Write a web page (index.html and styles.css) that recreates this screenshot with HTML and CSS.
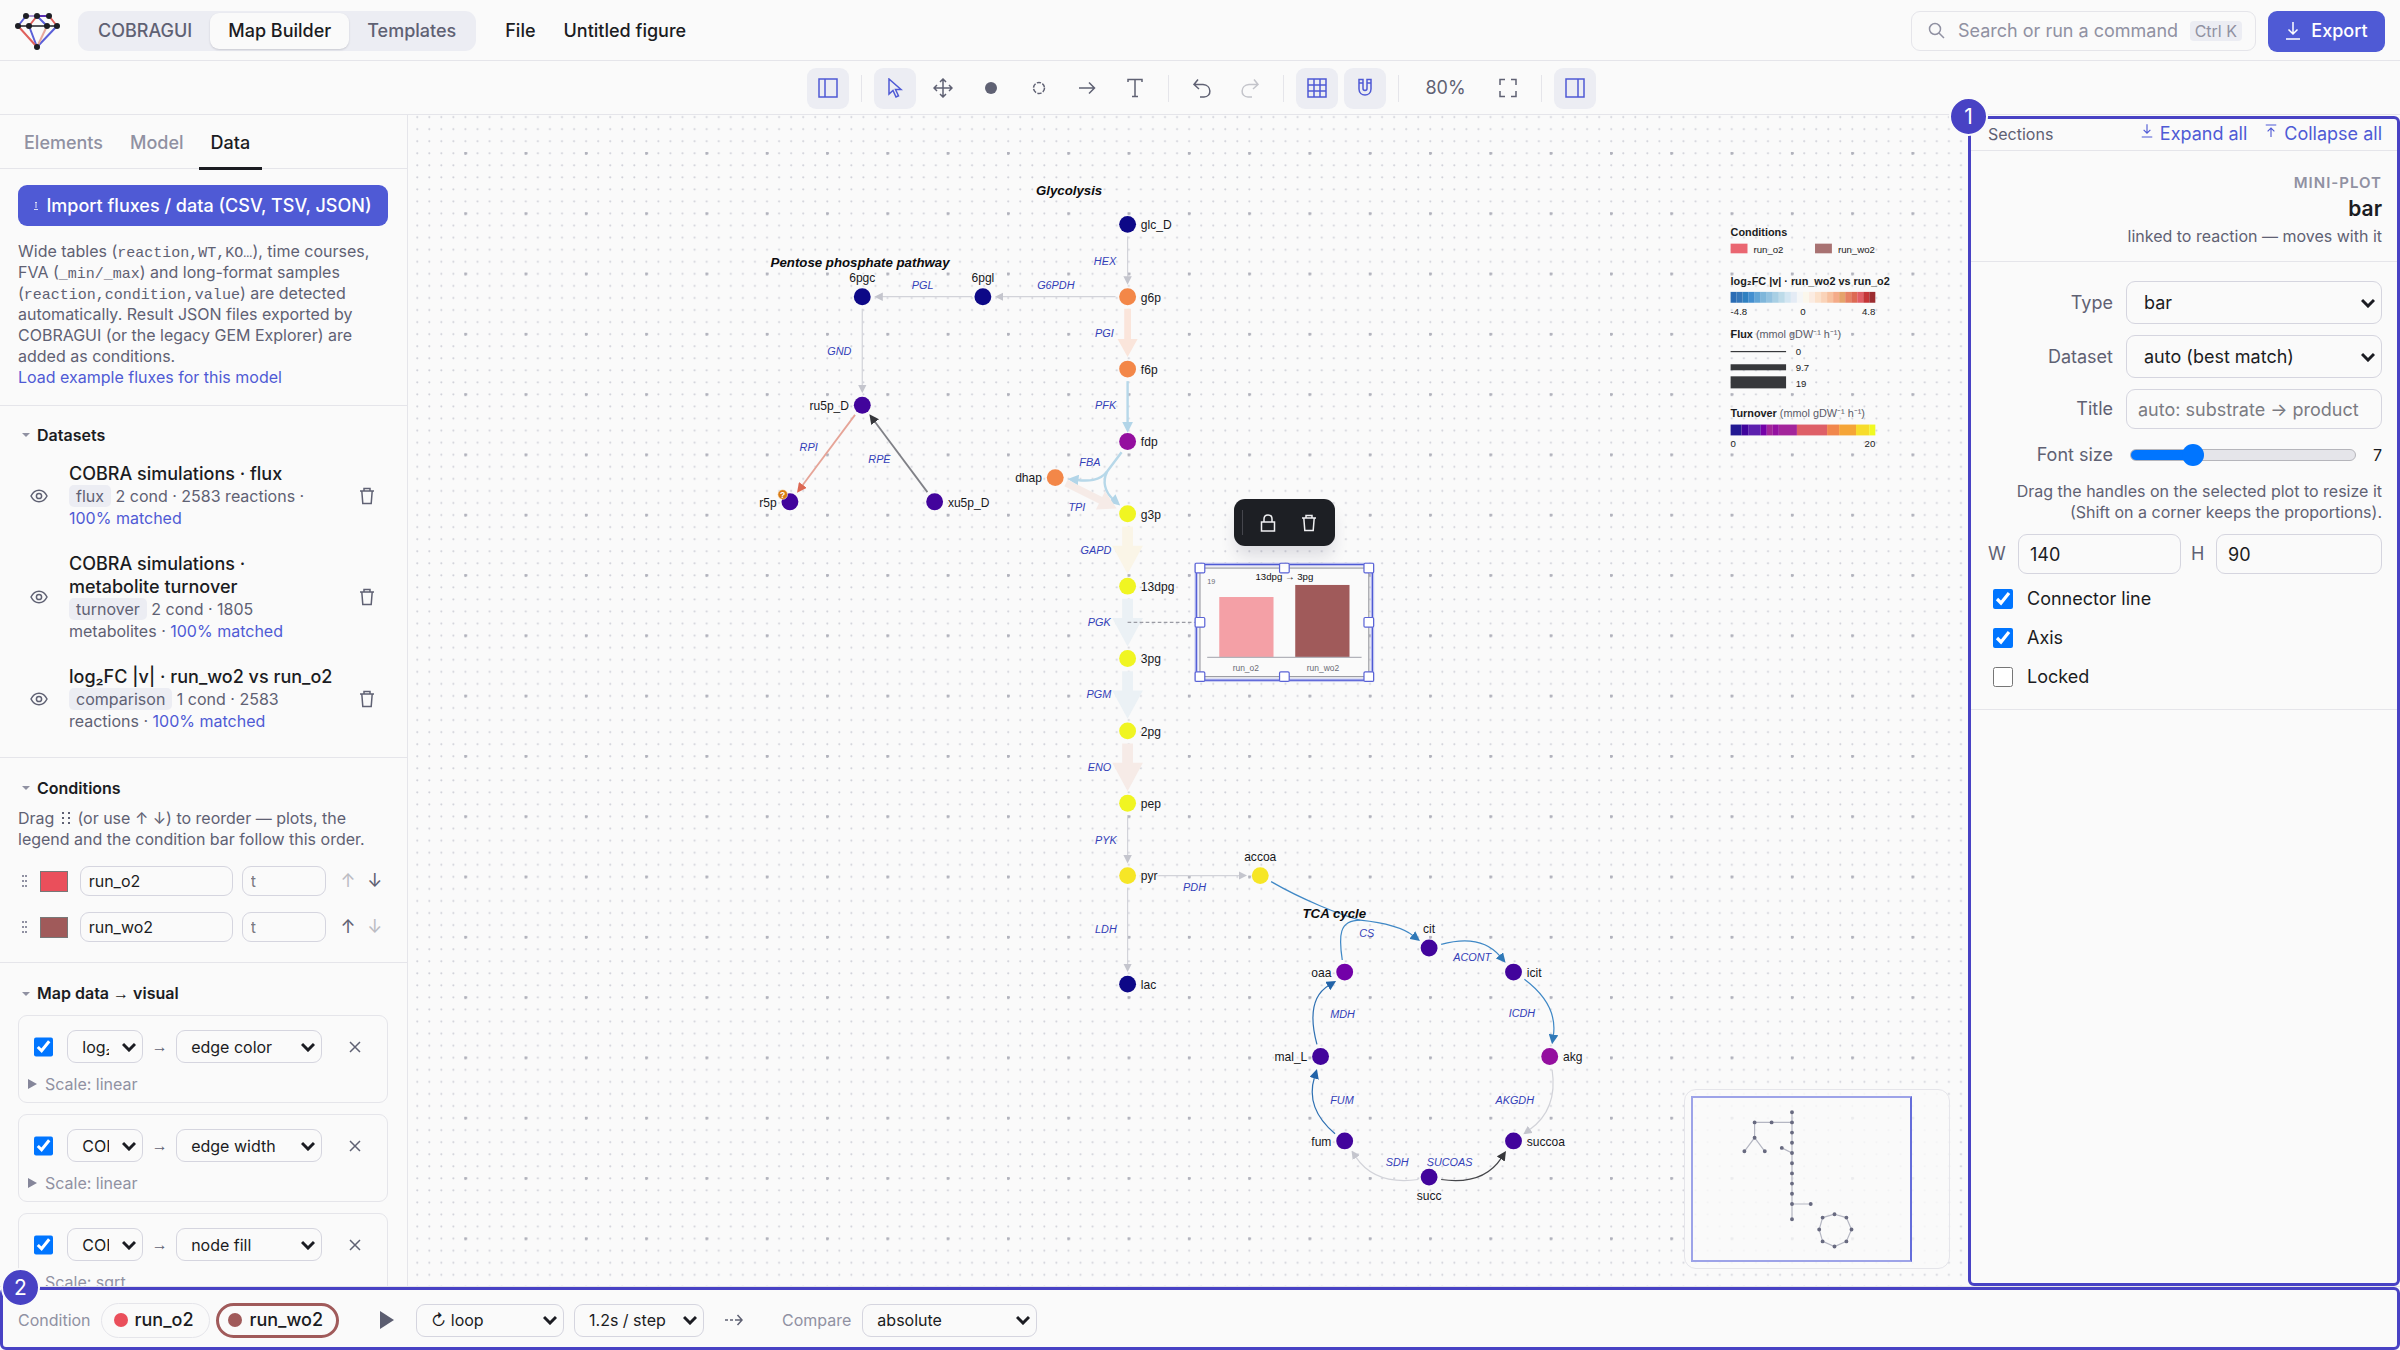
FILE: index.html
```html
<!DOCTYPE html>
<html lang="en">
<head>
<meta charset="utf-8">
<title>COBRAGUI Map Builder</title>
<link rel="stylesheet" href="styles.css">
</head>
<body>
<svg class="defs" aria-hidden="true">
  <symbol id="i-eye" viewBox="0 0 18 14"><path d="M1 7C3 3 6 1.200 9 1.200S15 3 17 7C15 11 12 12.800 9 12.800S3 11 1 7Z"/><circle cx="9" cy="7" r="2.600"/></symbol>
  <symbol id="i-trash" viewBox="0 0 16 18"><path d="M1 4H15M5 4V1.500H11V4M2.800 4L3.800 16.500H12.200L13.200 4"/></symbol>
  <symbol id="i-x" viewBox="0 0 12 12"><path d="M1 1L11 11M11 1L1 11"/></symbol>
  <symbol id="i-down" viewBox="0 0 16 18"><path d="M8 0V12M3.500 7.500L8 12L12.500 7.500M1 17H15"/></symbol>
  <symbol id="i-up" viewBox="0 0 16 18"><path d="M8 17V5M3.500 9.500L8 5L12.500 9.500M1 1H15"/></symbol>
</svg>
<div class="app">
  <header class="topbar">
    <svg class="logo" viewBox="0 0 46 38" aria-label="COBRAGUI logo">
      <g fill="none" stroke-width="2"><path stroke="#5a5fd8" d="M11 4L3 14M22 4L32 14M14 14L22 35M42 14L22 35"/><path stroke="#e0605c" d="M34 4L42 14M22 4L14 14M3 14L22 35"/><path stroke="#e8a79c" d="M32 14L22 35"/><path stroke="#a58fd0" d="M11 4H22"/><path stroke="#5a2fb0" d="M22 4H34"/><path stroke="#55565c" d="M3 14H42"/></g>
      <g class="knots"><circle cx="11" cy="4" r="3"/><circle cx="22" cy="4" r="3"/><circle cx="34" cy="4" r="3"/><circle cx="3" cy="14" r="3"/><circle cx="14" cy="14" r="3"/><circle cx="32" cy="14" r="3"/><circle cx="42" cy="14" r="3"/><circle cx="22" cy="35" r="3"/></g>
    </svg>
    <nav class="segments"><button>COBRAGUI</button><button class="on">Map Builder</button><button>Templates</button></nav>
    <button class="menu">File</button>
    <span class="doc-name">Untitled figure</span>
    <button class="search"><svg viewBox="0 0 18 18"><circle cx="7" cy="7" r="5.500"/><path d="M11 11L16 16"/></svg><span>Search or run a command</span><kbd>Ctrl K</kbd></button>
    <button class="primary export"><svg class="ic16"><use href="#i-down"/></svg>Export</button>
  </header>

  <div class="toolbar">
    <button class="tool on" aria-label="Left panel"><svg viewBox="0 0 20 20"><path d="M1 1H19V19H1ZM7 1V19"/></svg></button>
    <i class="sep"></i>
    <button class="tool on" aria-label="Select"><svg viewBox="0 0 20 20"><path d="M4 1V16L8 12.500L11 19L13.500 17.800L10.500 11.500H16Z"/></svg></button>
    <button class="tool" aria-label="Pan"><svg viewBox="0 0 20 20"><path d="M10 1V19M1 10H19M7 4L10 1L13 4M7 16L10 19L13 16M4 7L1 10L4 13M16 7L19 10L16 13"/></svg></button>
    <button class="tool" aria-label="Metabolite"><svg viewBox="0 0 20 20"><circle cx="10" cy="10" r="6" fill="currentColor" stroke="none"/></svg></button>
    <button class="tool" aria-label="Group"><svg viewBox="0 0 20 20"><circle cx="10" cy="10" r="5.500" stroke-dasharray="4.300 1.460"/></svg></button>
    <button class="tool" aria-label="Reaction"><svg viewBox="0 0 20 20"><path d="M2 10H17M12 4.500L17.500 10L12 15.500"/></svg></button>
    <button class="tool" aria-label="Text"><svg viewBox="0 0 20 20"><path d="M3 4V1.500H17V4M10 1.500V18.500M7 18.500H13"/></svg></button>
    <i class="sep"></i>
    <button class="tool" aria-label="Undo"><svg viewBox="0 0 20 20"><path d="M6 1.500L2 6.500L7 11M2 6.500H11C20 7 20 19 12 19H8"/></svg></button>
    <button class="tool" disabled aria-label="Redo"><svg viewBox="0 0 20 20"><path d="M14 1.500L18 6.500L13 11M18 6.500H9C0 7 0 19 8 19H12"/></svg></button>
    <i class="sep"></i>
    <button class="tool on" aria-label="Grid"><svg viewBox="0 0 20 20"><path d="M1 1H19V19H1ZM7 1V19M13 1V19M1 7H19M1 13H19"/></svg></button>
    <button class="tool on" aria-label="Snap"><svg viewBox="0 0 20 20"><path d="M4 1.500H8V10.500C8 13 12 13 12 10.500V1.500H16V11C16 19 4 19 4 11ZM4 5H8M12 5H16"/></svg></button>
    <i class="sep"></i>
    <button class="zoom">80%</button>
    <button class="tool" aria-label="Fit"><svg viewBox="0 0 20 20"><path d="M2 7V1.500H7M13 1.500H18V7M18 13V18.500H13M7 18.500H2V13"/></svg></button>
    <i class="sep"></i>
    <button class="tool on" aria-label="Right panel"><svg viewBox="0 0 20 20"><path d="M1 1H19V19H1ZM13 1V19"/></svg></button>
  </div>

  <main class="workspace">
    <aside class="left">
      <div class="tabs"><button>Elements</button><button>Model</button><button class="on">Data</button></div>
      <div class="scroll">
        <section class="intro">
          <button class="primary import"><svg viewBox="0 0 4 9"><path d="M2 7V1M1 2L2 1L3 2M0 8.500H4"/></svg>Import fluxes / data (CSV, TSV, JSON)</button>
          <p class="note">Wide tables (<code>reaction,WT,KO…</code>), time courses, FVA (<code>_min/_max</code>) and long-format samples (<code>reaction,condition,value</code>) are detected automatically. Result JSON files exported by COBRAGUI (or the legacy GEM Explorer) are added as conditions.<br><a href="#example">Load example fluxes for this model</a></p>
        </section>
        <section class="datasets">
          <h2>Datasets</h2>
          <div class="dataset"><button class="icon" aria-label="Toggle"><svg class="eye"><use href="#i-eye"/></svg></button><div class="info"><div class="name">COBRA simulations · flux</div><div class="meta"><span class="tag">flux</span> 2 cond · 2583 reactions · <a href="#m1">100% matched</a></div></div><button class="icon" aria-label="Delete"><svg class="bin"><use href="#i-trash"/></svg></button></div>
          <div class="dataset"><button class="icon" aria-label="Toggle"><svg class="eye"><use href="#i-eye"/></svg></button><div class="info"><div class="name">COBRA simulations · metabolite turnover</div><div class="meta"><span class="tag">turnover</span> 2 cond · 1805 metabolites · <a href="#m2">100% matched</a></div></div><button class="icon" aria-label="Delete"><svg class="bin"><use href="#i-trash"/></svg></button></div>
          <div class="dataset"><button class="icon" aria-label="Toggle"><svg class="eye"><use href="#i-eye"/></svg></button><div class="info"><div class="name">log₂FC |v| · run_wo2 vs run_o2</div><div class="meta"><span class="tag">comparison</span> 1 cond · 2583 reactions · <a href="#m3">100% matched</a></div></div><button class="icon" aria-label="Delete"><svg class="bin"><use href="#i-trash"/></svg></button></div>
        </section>
        <section class="conditions">
          <h2>Conditions</h2>
          <p class="note">Drag <svg class="grip wide" viewBox="0 0 8 12"><path d="M0 1H2M0 6H2M0 11H2M6 1H8M6 6H8M6 11H8"/></svg> (or use ↑ ↓) to reorder — plots, the legend and the condition bar follow this order.</p>
          <div class="cond-row"><svg class="grip" viewBox="0 0 5 12"><path d="M0 1H2M0 6H2M0 11H2M3 1H5M3 6H5M3 11H5"/></svg><input type="color" value="#ea4f5b" aria-label="Color of run_o2"><input class="c-name" type="text" value="run_o2" aria-label="Name"><input class="c-time" type="text" placeholder="t" aria-label="Time"><button class="arrow" disabled>↑</button><button class="arrow">↓</button></div>
          <div class="cond-row"><svg class="grip" viewBox="0 0 5 12"><path d="M0 1H2M0 6H2M0 11H2M3 1H5M3 6H5M3 11H5"/></svg><input type="color" value="#a05a5a" aria-label="Color of run_wo2"><input class="c-name" type="text" value="run_wo2" aria-label="Name"><input class="c-time" type="text" placeholder="t" aria-label="Time"><button class="arrow">↑</button><button class="arrow" disabled>↓</button></div>
        </section>
        <section class="mapping">
          <h2><span>Map data <span class="thin-arrow">→</span> visual</span></h2>
          <div class="card"><div class="card-row"><input type="checkbox" checked aria-label="Enabled"><select class="src" aria-label="Dataset"><option>log₂FC |v| · run_wo2 vs run_o2</option></select><span class="to">→</span><select class="dst" aria-label="Channel"><option>edge color</option></select><button class="icon" aria-label="Remove"><svg class="cross"><use href="#i-x"/></svg></button></div><details><summary>Scale: linear</summary></details></div>
          <div class="card"><div class="card-row"><input type="checkbox" checked aria-label="Enabled"><select class="src" aria-label="Dataset"><option>COBRA simulations · flux</option></select><span class="to">→</span><select class="dst" aria-label="Channel"><option>edge width</option></select><button class="icon" aria-label="Remove"><svg class="cross"><use href="#i-x"/></svg></button></div><details><summary>Scale: linear</summary></details></div>
          <div class="card"><div class="card-row"><input type="checkbox" checked aria-label="Enabled"><select class="src" aria-label="Dataset"><option>COBRA simulations · metabolite turnover</option></select><span class="to">→</span><select class="dst" aria-label="Channel"><option>node fill</option></select><button class="icon" aria-label="Remove"><svg class="cross"><use href="#i-x"/></svg></button></div><details><summary>Scale: sqrt</summary></details></div>
        </section>
      </div>
    </aside>

    <div class="canvas">
      <svg class="map" aria-label="Metabolic map">
        <defs>
          <pattern id="minor" width="10" height="10" patternUnits="userSpaceOnUse"><circle class="dot" cx="1" cy="1" r="0.850"/></pattern>
          <pattern id="major" width="50" height="50" patternUnits="userSpaceOnUse"><circle class="dot-major" cx="1" cy="1" r="1.400"/></pattern>
          <marker id="head" viewBox="0 0 7 7" markerWidth="7" markerHeight="7" refX="1" refY="3.500" orient="auto" markerUnits="userSpaceOnUse"><path d="M0 0L7 3.500L0 7Z" fill="#c4c5cd"/></marker>
          <marker id="head-dark" viewBox="0 0 7 7" markerWidth="8" markerHeight="8" refX="1" refY="3.500" orient="auto" markerUnits="userSpaceOnUse"><path d="M0 0L7 3.500L0 7Z" fill="#36373b"/></marker>
          <marker id="head-red" viewBox="0 0 7 7" markerWidth="8" markerHeight="8" refX="1" refY="3.500" orient="auto" markerUnits="userSpaceOnUse"><path d="M0 0L7 3.500L0 7Z" fill="#dc6853"/></marker>
          <marker id="head-blue" viewBox="0 0 7 7" markerWidth="8" markerHeight="8" refX="1" refY="3.500" orient="auto" markerUnits="userSpaceOnUse"><path d="M0 0L7 3.500L0 7Z" fill="#3079b8"/></marker>
          <marker id="head-navy" viewBox="0 0 7 7" markerWidth="8" markerHeight="8" refX="1" refY="3.500" orient="auto" markerUnits="userSpaceOnUse"><path d="M0 0L7 3.500L0 7Z" fill="#2263a8"/></marker>
          <marker id="head-sky" viewBox="0 0 7 7" markerWidth="9" markerHeight="9" refX="1" refY="3.500" orient="auto" markerUnits="userSpaceOnUse"><path d="M0 0L7 3.500L0 7Z" fill="#b2d5e8"/></marker>
          <g id="big-arrow"><path d="M-4.500 10.500H4.500V26.500H12.700L0 50L-12.700 26.500H-4.500Z"/></g>
        </defs>
        <g transform="translate(-4 37) scale(1.206)">
          <rect x="-50" y="-50" width="1500" height="1100" fill="url(#minor)"/>
          <rect x="-50" y="-50" width="1500" height="1100" fill="url(#major)"/>

          <g class="edge">
            <path class="grey" d="M600 70V104"/><path class="grey" d="M590 120H496"/><path class="grey" d="M471 120H396"/><path class="grey" d="M380 130V194"/>
            <path class="grey" d="M600 550V584"/><path class="grey" d="M600 610V674"/><path class="grey" d="M610 600H693"/>
            <path class="grey" d="M952 761Q957 794 933 811"/><path class="grey" d="M841 852Q805 857 789 833"/>
            <path class="red" d="M374 218L330 277"/><path class="dark thin" d="M434 282L390 223"/><path class="dark" d="M860 852Q895 857 910 834"/>
            <path class="sky" d="M600 190V225"/><path class="sky" d="M595 249L583 265C577 273 567 273 558 272"/><path class="sky" d="M583 265C579 273 581 282 588 288"/>
            <path class="blue" d="M719 605C745 620 775 632 793 637C812 639 828 643 837 650"/><path class="blue plain" d="M778 670C775 650 775 637 793 637"/>
            <path class="blue" d="M860 657Q893 648 909 667"/><path class="blue" d="M929 686Q957 707 953 733"/>
            <path class="navy" d="M772 814Q747 793 755 767"/><path class="navy" d="M757 740Q747 703 767 691"/>
          </g>
          <path fill="#fae5db" d="M597.200 130H602.800V155H608.300L600 170L591.700 155H597.200Z"/>
          <path fill="#f6ebe7" transform="translate(540 270) rotate(26.600)" d="M10 -3H42V-8.500L57 0L42 8.500V3H10Z"/>
          <use href="#big-arrow" x="600" y="300" fill="#faf5e7"/><use href="#big-arrow" x="600" y="360" fill="#ebf1f5"/><use href="#big-arrow" x="600" y="420" fill="#ebf1f5"/><use href="#big-arrow" x="600" y="480" fill="#f6ebe7"/>

          <g fill="#0d0887"><circle cx="600" cy="60" r="7"/><circle cx="480" cy="120" r="7"/><circle cx="380" cy="120" r="7"/><circle cx="600" cy="690" r="7"/></g>
          <g fill="#f38748"><circle cx="600" cy="120" r="7"/><circle cx="600" cy="180" r="7"/><circle cx="540" cy="270" r="7"/></g>
          <g fill="#940f9f"><circle cx="600" cy="240" r="7"/><circle cx="950" cy="750" r="7"/></g>
          <g fill="#f0f522"><circle cx="600" cy="300" r="7"/><circle cx="600" cy="360" r="7"/><circle cx="600" cy="420" r="7"/><circle cx="600" cy="480" r="7"/><circle cx="600" cy="540" r="7"/></g>
          <g fill="#f6e626"><circle cx="600" cy="600" r="7"/><circle cx="710" cy="600" r="7"/></g>
          <g fill="#42049c"><circle cx="380" cy="210" r="7"/><circle cx="320" cy="290" r="7"/><circle cx="440" cy="290" r="7"/><circle cx="850" cy="660" r="7"/><circle cx="920" cy="680" r="7"/><circle cx="920" cy="820" r="7"/><circle cx="850" cy="850" r="7"/><circle cx="780" cy="820" r="7"/><circle cx="760" cy="750" r="7"/></g>
          <circle cx="780" cy="680" r="7" fill="#7201a8"/>
          <circle cx="314" cy="284" r="4" fill="#d97b12" stroke="#fdf3e0" stroke-width="0.500"/><text class="warn" x="314" y="287">?</text>

          <g class="met">
            <text x="611" y="64">glc_D</text><text x="611" y="124">g6p</text><text x="611" y="184">f6p</text><text x="611" y="244">fdp</text><text x="611" y="304">g3p</text><text x="611" y="364">13dpg</text><text x="611" y="424">3pg</text><text x="611" y="484">2pg</text><text x="611" y="544">pep</text><text x="611" y="604">pyr</text><text x="611" y="694">lac</text>
            <text x="451" y="294">xu5p_D</text><text x="931" y="684">icit</text><text x="961" y="754">akg</text><text x="931" y="824">succoa</text>
          </g>
          <g class="met end"><text x="529" y="274">dhap</text><text x="369" y="214">ru5p_D</text><text x="309" y="294">r5p</text><text x="769" y="684">oaa</text><text x="749" y="754">mal_L</text><text x="769" y="824">fum</text></g>
          <g class="met mid"><text x="380" y="108">6pgc</text><text x="480" y="108">6pgl</text><text x="710" y="588">accoa</text><text x="850" y="648">cit</text><text x="850" y="869">succ</text></g>
          <g class="rxn">
            <text x="572" y="94">HEX</text><text x="573" y="153">PGI</text><text x="573" y="213">PFK</text><text x="560" y="260">FBA</text><text x="551" y="298">TPI</text><text x="561" y="333">GAPD</text><text x="567" y="393">PGK</text><text x="566" y="453">PGM</text><text x="567" y="513">ENO</text><text x="573" y="574">PYK</text><text x="573" y="648">LDH</text><text x="646" y="613">PDH</text>
            <text x="525" y="114">G6PDH</text><text x="421" y="114">PGL</text><text x="351" y="168">GND</text><text x="328" y="248">RPI</text><text x="385" y="258">RPE</text>
            <text x="792" y="651">CS</text><text x="870" y="671">ACONT</text><text x="916" y="717">ICDH</text><text x="905" y="789">AKGDH</text><text x="848" y="841">SUCOAS</text><text x="814" y="841">SDH</text><text x="768" y="789">FUM</text><text x="768" y="718">MDH</text>
          </g>
          <g class="pathway"><text x="524" y="36">Glycolysis</text><text x="304" y="95">Pentose phosphate pathway</text><text x="745" y="635">TCA cycle</text></g>

          <g class="legend">
            <text class="b" x="1100" y="70">Conditions</text>
            <rect x="1100" y="76" width="14" height="8" fill="#ea6671"/><text x="1119" y="84">run_o2</text><rect x="1170" y="76" width="14" height="8" fill="#a87272"/><text x="1189" y="84">run_wo2</text>
            <text class="b" x="1100" y="110">log₂FC |v| · run_wo2 vs run_o2</text>
            <g transform="translate(1100 116)">
              <rect width="5" height="9" fill="#2a6cb4"/><rect x="5" width="5" height="9" fill="#3476b9"/><rect x="10" width="5" height="9" fill="#2f80c0"/><rect x="15" width="5" height="9" fill="#438fd0"/><rect x="20" width="5" height="9" fill="#62a5d6"/><rect x="25" width="5" height="9" fill="#7fb6da"/><rect x="30" width="5" height="9" fill="#93c2e0"/><rect x="35" width="5" height="9" fill="#a8cfe4"/><rect x="40" width="5" height="9" fill="#bddbe9"/><rect x="45" width="5" height="9" fill="#d3e6f2"/><rect x="50" width="5" height="9" fill="#e4ebf5"/><rect x="55" width="5" height="9" fill="#f5f6f7"/><rect x="60" width="5" height="9" fill="#fbf7ec"/><rect x="65" width="5" height="9" fill="#fbece2"/><rect x="70" width="5" height="9" fill="#fbe1cb"/><rect x="75" width="5" height="9" fill="#fad3b8"/><rect x="80" width="5" height="9" fill="#f7c19f"/><rect x="85" width="5" height="9" fill="#f4ab88"/><rect x="90" width="5" height="9" fill="#e5a36b"/><rect x="95" width="5" height="9" fill="#e68264"/><rect x="100" width="5" height="9" fill="#dd6a54"/><rect x="105" width="5" height="9" fill="#e15f66"/><rect x="110" width="5" height="9" fill="#c53538"/><rect x="115" width="5" height="9" fill="#9c2c30"/>
            </g>
            <text x="1100" y="135">-4.8</text><text class="mid" x="1160" y="135">0</text><text class="end" x="1220" y="135">4.8</text>
            <text class="b" x="1100" y="154">Flux <tspan class="unit">(mmol gDW⁻¹ h⁻¹)</tspan></text>
            <g fill="#37383b"><rect x="1100" y="165" width="46" height="1"/><rect x="1100" y="176" width="46" height="5"/><rect x="1100" y="186" width="46" height="10"/></g>
            <text x="1154" y="168">0</text><text x="1154" y="182">9.7</text><text x="1154" y="195">19</text>
            <text class="b" x="1100" y="220">Turnover <tspan class="unit">(mmol gDW⁻¹ h⁻¹)</tspan></text>
            <g transform="translate(1100 226)">
              <rect width="9" height="9" fill="#231993"/><rect x="9" width="6" height="9" fill="#3f049c"/><rect x="15" width="10" height="9" fill="#5c20ae"/><rect x="25" width="5" height="9" fill="#7401a8"/><rect x="30" width="5" height="9" fill="#a2269a"/><rect x="35" width="5" height="9" fill="#9411a1"/><rect x="40" width="15" height="9" fill="#a3259b"/><rect x="55" width="25" height="9" fill="#de5f67"/><rect x="80" width="10" height="9" fill="#f1874c"/><rect x="90" width="14" height="9" fill="#f5a537"/><rect x="104" width="11" height="9" fill="#f7dc2b"/><rect x="115" width="5" height="9" fill="#f0f921"/>
            </g>
            <text x="1100" y="245">0</text><text class="end" x="1220" y="245">20</text>
          </g>

          <path class="connector" d="M600 390H656"/>
          <g class="plot">
            <rect class="frame" x="660" y="345" width="140" height="90"/>
            <rect x="676" y="369" width="45" height="50" fill="#f4a0a6"/><rect x="739" y="359" width="45" height="60" fill="#a05a5a"/>
            <path class="axis" d="M666 419H794"/>
            <text class="title" x="730" y="355">13dpg → 3pg</text><text class="tick" x="666" y="358">19</text><text class="cat" x="698" y="430">run_o2</text><text class="cat" x="762" y="430">run_wo2</text>
            <rect class="halo" x="657" y="342" width="146" height="96"/><rect class="selection" x="657" y="342" width="146" height="96"/>
            <g class="handles"><rect x="656" y="341" width="8" height="8" rx="1"/><rect x="726" y="341" width="8" height="8" rx="1"/><rect x="796" y="341" width="8" height="8" rx="1"/><rect x="656" y="386" width="8" height="8" rx="1"/><rect x="796" y="386" width="8" height="8" rx="1"/><rect x="656" y="431" width="8" height="8" rx="1"/><rect x="726" y="431" width="8" height="8" rx="1"/><rect x="796" y="431" width="8" height="8" rx="1"/></g>
          </g>
        </g>
      </svg>
      <div class="popup">
        <button aria-label="Lock"><svg viewBox="0 0 16 18"><path d="M1.500 8H14.500V17H1.500ZM4 8V5C4 -0.500 12 -0.500 12 5V8"/></svg></button>
        <button aria-label="Delete"><svg viewBox="0 0 16 18"><use href="#i-trash"/></svg></button>
      </div>
      <div class="minimap">
        <svg viewBox="0 0 264 178"><g transform="translate(5 12) scale(0.170)">
          <path class="mm-line" d="M600 60V690M600 120H380V210L320 290M380 210L440 290M540 270L600 300M600 600H710M850 660L920 680L950 750L920 820L850 850L780 820L760 750L780 680Z"/>
          <path class="mm-dots" d="M600 60h0M600 120h0M600 180h0M600 240h0M600 300h0M600 360h0M600 420h0M600 480h0M600 540h0M600 600h0M600 690h0M480 120h0M380 120h0M380 210h0M320 290h0M440 290h0M540 270h0M710 600h0M850 660h0M920 680h0M950 750h0M920 820h0M850 850h0M780 820h0M760 750h0M780 680h0"/>
        </g></svg>
        <div class="viewport"></div>
      </div>
    </div>

    <aside class="right">
      <div class="sections"><span>Sections</span><button><svg class="ic12"><use href="#i-down" width="12" height="14"/></svg>Expand all</button><button><svg class="ic12"><use href="#i-up" width="12" height="14"/></svg>Collapse all</button></div>
      <div class="heading"><div class="kind">MINI-PLOT</div><h1>bar</h1><div class="link-note">linked to reaction — moves with it</div></div>
      <form class="props">
        <label for="p-type">Type</label><select id="p-type"><option>bar</option></select>
        <label for="p-data">Dataset</label><select id="p-data"><option>auto (best match)</option></select>
        <label for="p-title">Title</label><input id="p-title" type="text" placeholder="auto: substrate → product">
        <label for="p-size">Font size</label><div class="range"><input id="p-size" type="range" min="4" max="16" value="7"><output>7</output></div>
        <p class="hint">Drag the handles on the selected plot to resize it (Shift on a corner keeps the proportions).</p>
        <div class="size"><label for="p-w">W</label><input id="p-w" type="text" value="140"><label for="p-h">H</label><input id="p-h" type="text" value="90"></div>
        <div class="checks"><label><input type="checkbox" checked>Connector line</label><label><input type="checkbox" checked>Axis</label><label><input type="checkbox">Locked</label></div>
      </form>
      <div class="callout"><b>1</b></div>
    </aside>
  </main>

  <footer class="bar">
    <span class="faint">Condition</span>
    <div class="chips"><button class="chip"><i class="c-o2"></i>run_o2</button><button class="chip on"><i class="c-wo2"></i>run_wo2</button></div>
    <button class="play" aria-label="Play"><svg viewBox="0 0 16 18"><path d="M1 0L15 9L1 18Z"/></svg></button>
    <select class="s-loop" aria-label="Playback"><option>↻ loop</option></select>
    <select class="s-step" aria-label="Speed"><option>1.2s / step</option></select>
    <button class="tween" aria-label="Tween"><svg viewBox="0 0 18 12"><path d="M0 6H3M5 6H8M10 6H16M12.500 1L17 6L12.500 11"/></svg></button>
    <label class="faint" for="cmp">Compare</label>
    <select id="cmp" class="s-cmp"><option>absolute</option></select>
    <div class="callout"><b>2</b></div>
  </footer>
</div>
</body>
</html>
```
FILE: styles.css
```css
:root {
  --bg: #fafafa;
  --line: #e5e5ea;
  --field: #d5d5df;
  --ink: #1b1c22;
  --muted: #5f6173;
  --faint: #9091a2;
  --soft: #ecedf3;
  --accent: #4f5ad5;
  --callout: #4842c4;
  --native: #0075ff;
}
* { box-sizing: border-box; }
body { margin: 0; background: var(--bg); color: var(--ink); font: 18px/24px Inter, "Noto Sans", sans-serif; }
button, input, select { font: inherit; color: inherit; margin: 0; }
button { background: none; border: 0; padding: 0; display: inline-flex; align-items: center; justify-content: center; }
a { color: var(--accent); text-decoration: none; }
h1, h2, p { margin: 0; }
svg { fill: none; stroke: currentColor; stroke-width: 1.5px; flex: none; }
.defs { position: absolute; width: 0; height: 0; }

.app { display: grid; grid-template-rows: 61px 54px minmax(0, 1fr) 64px; height: 100vh; }

/* Top bar */
.topbar { display: flex; align-items: center; padding: 2px 15px 0 15px; border-bottom: 1px solid var(--line); }
.logo { width: 46px; height: 38px; margin-right: 17px; }
.knots { fill: #1d1e24; stroke: none; }
.segments { display: flex; padding: 2px; height: 40px; background: var(--soft); border-radius: 11px; font-weight: 500; }
.segments button { padding: 0 18px; border-radius: 9px; color: var(--muted); }
.segments .on { background: var(--bg); color: var(--ink); box-shadow: 0 1px 2px rgba(20, 20, 40, .16); }
.menu { margin-left: 29px; font-weight: 500; }
.doc-name { margin-left: 28px; font-weight: 500; }
.search { margin-left: auto; width: 345px; height: 40px; padding: 0 13px 0 16px; border: 1px solid var(--line); border-radius: 9px; color: var(--faint); }
.search svg { width: 18px; height: 18px; margin-right: 12px; }
.search kbd { margin-left: auto; font: 16px/20px Inter, sans-serif; background: var(--soft); border-radius: 4px; padding: 0 5px; }
.primary { background: var(--accent); color: #fff; font-weight: 500; border-radius: 9px; height: 41px; }
.export { margin-left: 12px; width: 117px; gap: 10px; }
.ic16 { width: 16px; height: 18px; }
.ic12 { width: 12px; height: 14px; }

/* Toolbar */
.toolbar { display: flex; align-items: center; justify-content: center; gap: 6px; padding: 1px 0 0 2px; border-bottom: 1px solid var(--line); color: var(--muted); }
.tool { width: 42px; height: 41px; border-radius: 9px; }
.tool svg { width: 20px; height: 20px; }
.tool.on { background: var(--soft); color: var(--accent); }
.tool:disabled { opacity: .35; color: var(--muted); }
.sep { width: 1px; height: 27px; margin: 0 6px; background: var(--line); }
.zoom { width: 70px; color: var(--muted); }

.workspace { display: grid; grid-template-columns: 408px minmax(0, 1fr) 432px; min-height: 0; }

/* Left panel */
.left { display: flex; flex-direction: column; min-height: 0; border-right: 1px solid var(--line); }
.tabs { display: flex; gap: 3px; height: 54px; flex: none; padding: 0 12px; border-bottom: 1px solid var(--line); font-weight: 500; color: var(--faint); }
.tabs button { padding: 3px 12px 0; height: 55px; border-bottom: 3px solid transparent; }
.tabs .on { color: var(--ink); border-color: var(--ink); }
.scroll { flex: 1; min-height: 0; overflow: hidden; }
.scroll section { padding: 18px 19px 18px 18px; border-bottom: 1px solid var(--line); }
.scroll .intro { padding-top: 16px; padding-bottom: 17px; }
.import { width: 100%; gap: 8px; }
.import svg { width: 4px; height: 9px; stroke-width: 1px; opacity: .8; }
.note { font-size: 16px; line-height: 21px; color: var(--muted); }
.intro .note { margin-top: 15px; }
code { font: 15px/15px "Liberation Mono", monospace; }
h2 { font-size: 16px; line-height: 24px; font-weight: 600; display: flex; align-items: center; gap: 7px; padding-left: 4px; }
h2::before { content: ""; border: 4px solid transparent; border-top-color: var(--faint); border-bottom: 0; }
.thin-arrow { font-family: "Liberation Sans", sans-serif; font-weight: 400; }
.scroll .datasets { padding-top: 17px; padding-bottom: 13px; }
.dataset { display: flex; align-items: center; padding: 11px 0 12px; }
.datasets h2 + .dataset { padding-top: 15px; }
.info { flex: 1; padding-right: 12px; }
.icon { width: 42px; height: 36px; color: var(--muted); }
.dataset .icon:first-child { width: 51px; padding-right: 9px; }
.eye { width: 18px; height: 14px; }
.bin { width: 16px; height: 18px; }
.cross { width: 12px; height: 12px; }
.name { line-height: 23px; font-weight: 500; }
.meta { font-size: 16px; line-height: 22px; color: var(--muted); }
.tag { display: inline-block; padding: 0 7px; background: var(--soft); border-radius: 5px; }
.grip { width: 5px; height: 12px; stroke: var(--faint); stroke-width: 2px; }
.grip.wide { width: 8px; stroke: var(--muted); margin: 0 3px; }
.conditions .note { margin-top: 8px; }
.cond-row { display: flex; align-items: center; height: 30px; margin-top: 16px; padding-left: 4px; }
.scroll .conditions { padding-bottom: 20px; }
input[type=color] { width: 28px; height: 21px; margin: 0 12px 0 13px; padding: 0; border: 1px solid #777; background: none; }
input[type=color]::-webkit-color-swatch-wrapper { padding: 0; }
input[type=color]::-webkit-color-swatch { border: 0; }
input[type=text], select { border: 1px solid var(--field); border-radius: 9px; background-color: var(--bg); }
::placeholder { color: #7b7b82; opacity: 1; }
.cond-row input[type=text] { height: 30px; padding: 0 8px; font-size: 16px; }
.cond-row .c-name { width: 153px; margin-right: 9px; }
.cond-row .c-time { width: 84px; margin-right: 9px; }
.arrow { width: 27px; height: 30px; color: var(--muted); }
.arrow:disabled { opacity: .4; }
.mapping .card:first-of-type { margin-top: 9px; }
.card { height: 88px; margin-bottom: 11px; padding: 14px 12px 0 9px; border: 1px solid var(--line); border-radius: 9px; }
.card-row { display: flex; align-items: center; }
input[type=checkbox] { width: 20px; height: 20px; accent-color: var(--native); }
.card input[type=checkbox] { margin: 0 14px 0 6px; }
select { appearance: none; height: 33px; padding: 0 28px 0 14px; background-repeat: no-repeat; background-position: right 6px center; background-image: url("data:image/svg+xml,%3Csvg xmlns='http://www.w3.org/2000/svg' width='14' height='10'%3E%3Cpath d='M1 2L7 8L13 2' fill='none' stroke='%231b1c22' stroke-width='3'/%3E%3C/svg%3E"); }
.card select, .bar select { font-size: 16px; }
.card .src { width: 76px; padding-right: 33px; }
.dst { width: 150px; }
.to { width: 34px; text-align: center; color: var(--muted); font: 16px/24px "Liberation Sans", sans-serif; }
.card .icon { margin-left: 12px; height: 33px; }
details { color: var(--faint); font-size: 16px; line-height: 24px; margin-top: 9px; }
summary { list-style: none; display: flex; align-items: center; gap: 8px; }
summary::before { content: ""; border: 5px solid transparent; border-left: 9px solid #85869a; border-right: 0; }

/* Canvas */
.canvas { position: relative; overflow: hidden; min-width: 0; }
.map { display: block; width: 100%; height: 100%; stroke: none; fill: currentColor; font-family: "Liberation Sans", Arial, sans-serif; }
.dot { fill: #cfd0d8; }
.dot-major { fill: #b1b2bc; }
.edge path { fill: none; stroke-width: 1px; }
.edge .grey { stroke: #d2d3d9; marker-end: url(#head); }
.edge .red { stroke: #e6a497; stroke-width: 1.5px; marker-end: url(#head-red); }
.edge .dark { stroke: #45464a; marker-end: url(#head-dark); }
.edge .thin { stroke: #808187; stroke-width: 1.5px; }
.edge .sky { stroke: #b7d8e9; stroke-width: 2px; marker-end: url(#head-sky); }
.edge .blue { stroke: #3f88c6; marker-end: url(#head-blue); }
.edge .plain { marker-end: none; }
.edge .navy { stroke: #2e70b2; marker-end: url(#head-navy); }
.met { font-size: 10px; fill: #17181c; stroke: var(--bg); stroke-width: 2px; paint-order: stroke; }
.rxn { font-size: 9px; font-style: italic; fill: #3340b8; }
.pathway { font-size: 11px; font-weight: 700; font-style: italic; fill: #0c0c0e; }
.warn { font-size: 7px; font-weight: 700; fill: #fff; text-anchor: middle; }
.mid { text-anchor: middle; }
.end { text-anchor: end; }
.legend { font-size: 8px; fill: #1b1c22; }
.legend .b { font-size: 9px; font-weight: 700; }
.legend .unit { font-weight: 400; fill: #5b5c68; }
.connector { stroke: #9a9ba3; stroke-width: 1px; stroke-dasharray: 3 2; }
.plot .frame { fill: #fafafa; stroke: #9c9da4; stroke-width: 1px; }
.plot .axis { stroke: #b2b3ba; stroke-width: 1px; }
.plot .title { font-size: 8px; text-anchor: middle; fill: #111; }
.plot .tick { font-size: 6px; fill: #6b6c75; }
.plot .cat { font-size: 7px; text-anchor: middle; fill: #6b6c75; }
.plot .halo { fill: none; stroke: #c7caf0; stroke-width: 3px; }
.plot .selection { fill: none; stroke: #4f5ad5; stroke-width: 1px; }
.handles { fill: #fff; stroke: #5a63d6; stroke-width: 1px; }
.popup { position: absolute; left: 826px; top: 384px; width: 101px; height: 47px; padding: 0 5px 0 8px; display: flex; align-items: center; border-radius: 11px; background: #1d1f24; color: #f0f0f2; box-shadow: 0 12px 16px -2px rgba(40, 40, 80, .14); }
.popup::before { content: ""; width: 1px; height: 25px; margin-right: 4px; background: #45464d; }
.popup button { flex: 1; height: 41px; }
.popup svg { width: 16px; height: 18px; }
.minimap { position: absolute; right: 18px; bottom: 17px; width: 266px; height: 180px; border: 1px solid var(--line); border-radius: 12px; background: rgba(250, 250, 250, .8); }
.minimap svg { display: block; width: 264px; height: 178px; }
.mm-line { stroke: #b4b6c2; stroke-width: 7px; }
.mm-dots { stroke: #686a80; stroke-width: 23px; stroke-linecap: round; }
.viewport { position: absolute; left: 6px; top: 6px; width: 221px; height: 166px; border: 2px solid #9da3e8; border-right-color: #646dda; }

/* Right panel */
.right { position: relative; }
.sections { display: flex; align-items: center; height: 36px; padding: 2px 18px 0 20px; border-bottom: 1px solid var(--line); font-size: 16px; color: var(--muted); }
.sections span { margin-right: auto; }
.sections button { margin-left: 18px; gap: 7px; color: var(--accent); font-size: 18px; font-weight: 400; }
.sections svg { margin-bottom: 6px; }
.heading { padding: 20px 18px 12px; text-align: right; border-bottom: 1px solid var(--line); height: 111px; }
.kind { font-size: 15px; font-weight: 600; letter-spacing: 1px; color: var(--faint); line-height: 24px; }
h1 { font-size: 21px; line-height: 28px; font-weight: 600; }
.link-note { font-size: 16px; line-height: 26px; color: var(--muted); }
.props { display: grid; grid-template-columns: 125px 256px; column-gap: 13px; row-gap: 11px; align-items: center; padding: 19px 18px 20px 20px; border-bottom: 1px solid var(--line); }
.props > label { text-align: right; color: var(--muted); }
.props > select { height: 43px; padding-left: 17px; }
.props input[type=text] { height: 40px; padding: 0 11px; min-width: 0; }
.range { display: flex; align-items: center; justify-content: space-between; height: 30px; padding-left: 4px; }
.range output { font-size: 16px; }
input[type=range] { appearance: none; width: 226px; height: 22px; background: none; }
input[type=range]::-webkit-slider-runnable-track { height: 12px; border: 1px solid #b5b5bb; border-radius: 6px; background: linear-gradient(to right, var(--native) 27%, #e5e5ea 27%); }
input[type=range]::-webkit-slider-thumb { appearance: none; width: 22px; height: 22px; margin-top: -6px; border-radius: 50%; background: var(--native); }
.hint { grid-column: 1 / -1; text-align: right; font-size: 16px; line-height: 21px; color: var(--muted); }
.size { grid-column: 1 / -1; display: grid; grid-template-columns: 30px 163fr 35px 166fr; align-items: center; color: var(--muted); }
.size label:nth-of-type(2) { padding-left: 10px; }
.size input { color: var(--ink); }
.checks { grid-column: 1 / -1; display: grid; gap: 15px; padding: 2px 5px 0; }
.checks label { display: flex; align-items: center; gap: 14px; }

/* Callouts */
.callout { position: absolute; inset: 1px 0 0 0; border: 3px solid var(--callout); border-radius: 6px; pointer-events: none; z-index: 2; }
.callout b { position: absolute; left: -22px; top: -22px; width: 39px; height: 39px; border: 2px solid var(--bg); border-radius: 50%; background: var(--callout); color: #fff; font-size: 21px; line-height: 35px; font-weight: 400; text-align: center; }
.bar .callout { top: 0; }
.bar .callout b { left: -2px; }

/* Condition bar */
.bar { position: relative; display: flex; align-items: center; padding: 3px 18px 0; border-top: 1px solid var(--line); background: var(--bg); }
.faint { color: var(--faint); font-size: 16px; }
.chips { display: flex; gap: 6px; margin-left: 10px; }
.chip { height: 35px; padding: 0 16px 0 12px; border: 1px solid var(--line); border-radius: 18px; font-weight: 500; gap: 7px; }
.chip i { width: 14px; height: 14px; border-radius: 50%; }
.chip.on { border: 3px solid #a05a5a; padding: 0 13px 0 9px; }
.c-o2 { background: #ea4f5b; }
.c-wo2 { background: #a05a5a; }
.play { width: 42px; height: 36px; margin-left: 27px; color: #5b5d70; }
.play svg { width: 16px; height: 18px; fill: currentColor; stroke: none; }
.s-loop { width: 148px; margin-left: 8px; }
.s-step { width: 130px; margin-left: 10px; }
.tween { width: 42px; height: 36px; margin: 0 27px 0 9px; color: var(--muted); }
.tween svg { width: 18px; height: 12px; }
.s-cmp { width: 175px; margin-left: 11px; }
```
